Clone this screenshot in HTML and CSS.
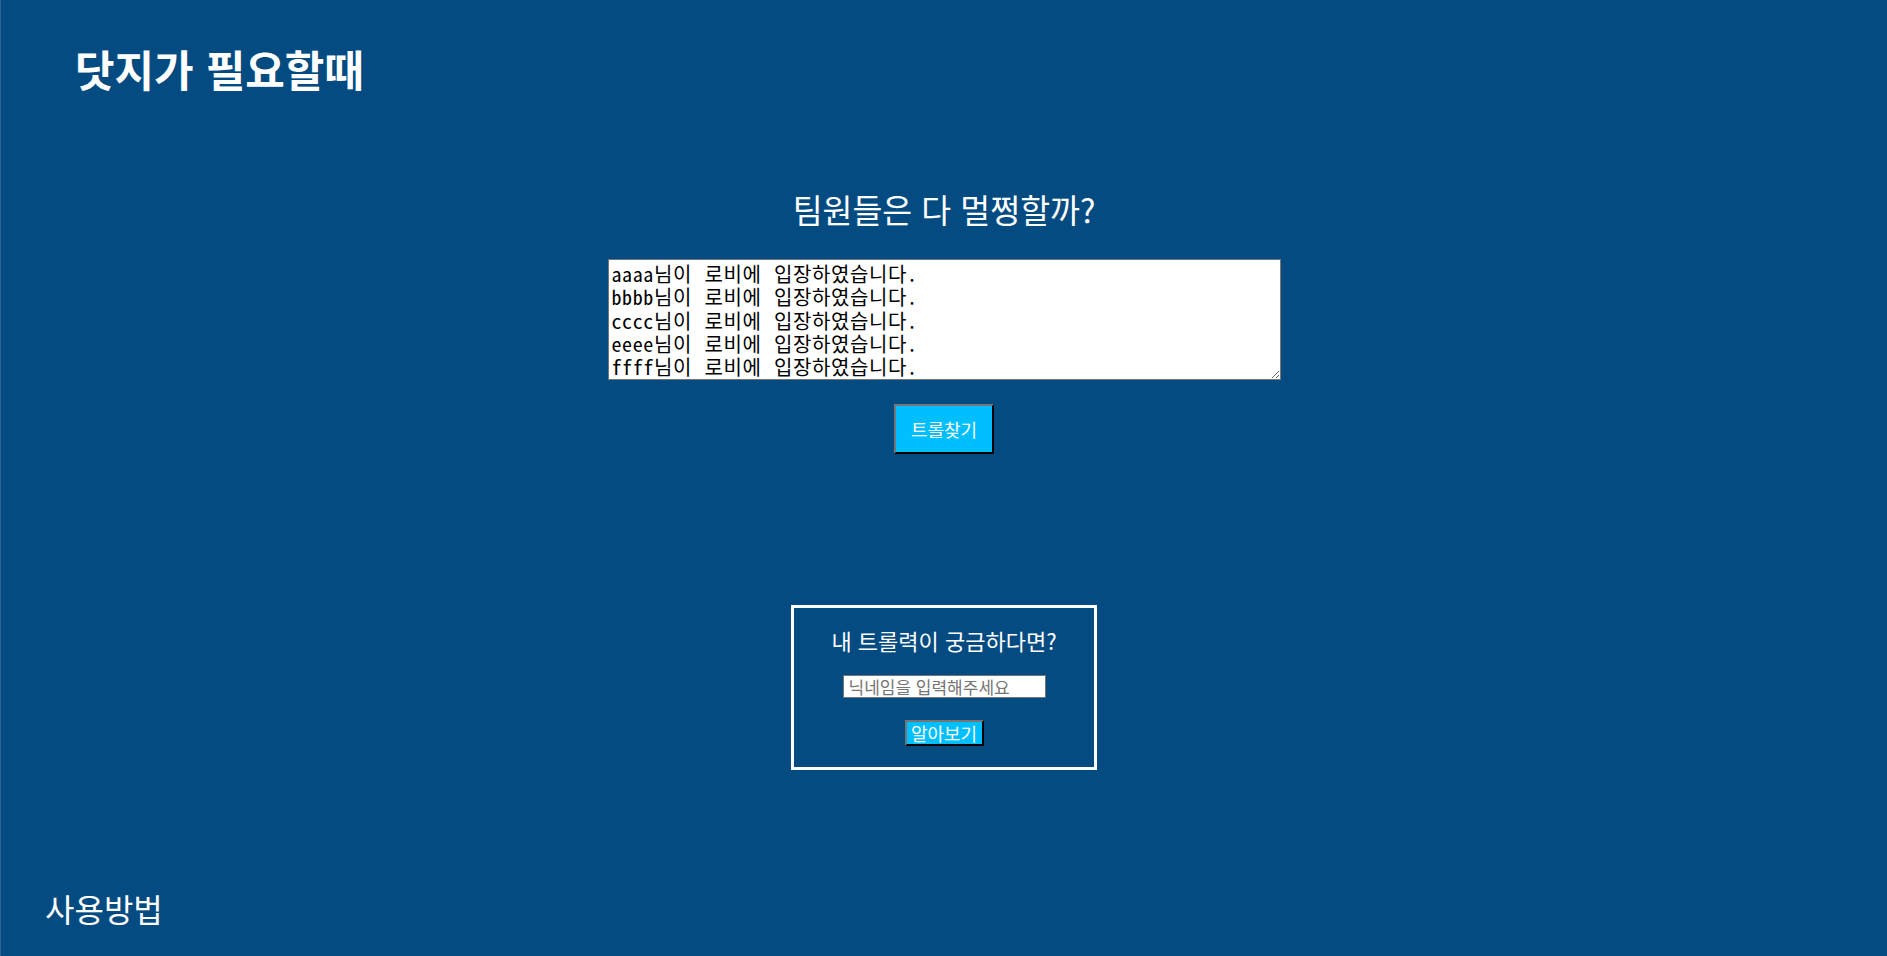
FILE: index.html
```html
<!DOCTYPE html>
<html lang="ko">
<head>
<meta charset="utf-8">
<title>닷지가 필요할때</title>
<link rel="stylesheet" href="styles.css">
</head>
<body>
<div class="page">
  <header class="header">
    <h1 class="logo">닷지가 필요할때</h1>
  </header>
  <main class="main">
    <h2 class="question">팀원들은 다 멀쩡할까?</h2>
    <textarea class="chat" spellcheck="false" readonly>aaaa님이 로비에 입장하였습니다.
bbbb님이 로비에 입장하였습니다.
cccc님이 로비에 입장하였습니다.
eeee님이 로비에 입장하였습니다.
ffff님이 로비에 입장하였습니다.</textarea>
    <button class="find-btn" type="button">트롤찾기</button>
    <section class="check-box">
      <p class="check-title">내 트롤력이 궁금하다면?</p>
      <input class="nick-input" type="text" placeholder="닉네임을 입력해주세요">
      <button class="check-btn" type="button">알아보기</button>
    </section>
  </main>
  <footer class="footer">
    <a class="howto">사용방법</a>
  </footer>
</div>
</body>
</html>
```

FILE: styles.css
```css
html, body {
  margin: 0;
  padding: 0;
}
body {
  background: #034b81;
  color: #ffffff;
  font-family: "Noto Sans CJK KR", "Noto Sans", sans-serif;
}
.page {
  height: 956px;
  border-left: 1px solid #2a6594;
  display: flex;
  flex-direction: column;
}
.header {
  padding: 46px 0 0 74px;
}
.logo {
  margin: 0;
  font-size: 43px;
  line-height: 44px;
  font-weight: 700;
}
.main {
  display: flex;
  flex-direction: column;
  align-items: center;
}
.question {
  margin: 97px 0 0;
  font-size: 32.5px;
  line-height: 44px;
  font-weight: 400;
}
.chat {
  box-sizing: border-box;
  margin-top: 28px;
  width: 673px;
  height: 121px;
  padding: 2px 3px;
  border: 1px solid #767676;
  background: #fff;
  color: #000;
  font-family: "Noto Sans Mono CJK KR", "Noto Sans CJK KR", monospace;
  font-size: 20px;
  font-weight: 300;
  line-height: 23.3px;
  letter-spacing: 0.6px;
  word-spacing: 2px;
  resize: both;
  outline: none;
}
.find-btn {
  margin-top: 24px;
  width: 100px;
  height: 50px;
  background: #00bfff;
  color: #fff;
  border: 2px outset #767676;
  border-right-color: #222;
  border-bottom-color: #222;
  font-family: inherit;
  font-size: 18px;
  padding: 0;
}
.check-box {
  margin-top: 151px;
  box-sizing: border-box;
  width: 306px;
  height: 165px;
  border: 3px solid #fff;
  display: flex;
  flex-direction: column;
  align-items: center;
}
.check-title {
  margin: 17px 0 0;
  font-size: 22px;
  line-height: 30px;
}
.nick-input {
  box-sizing: border-box;
  margin-top: 20px;
  width: 203px;
  height: 23px;
  border: 1px solid #767676;
  padding: 0 5px;
  font-family: inherit;
  font-size: 17px;
  background: #fff;
}
.nick-input::placeholder {
  color: #757575;
}
.check-btn {
  margin-top: 22px;
  width: 79px;
  height: 26px;
  padding: 0;
  background: #00bfff;
  color: #fff;
  border: 2px outset #767676;
  border-right-color: #222;
  border-bottom-color: #222;
  font-family: inherit;
  font-size: 18px;
  line-height: 20px;
}
.footer {
  margin-top: auto;
  padding: 0 0 28px 44px;
}
.howto {
  font-size: 32px;
  line-height: 40px;
  color: #fff;
}
```
